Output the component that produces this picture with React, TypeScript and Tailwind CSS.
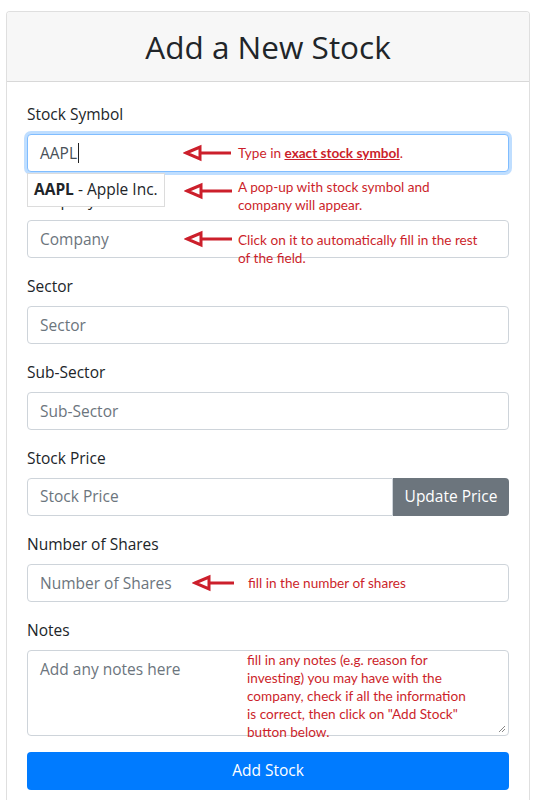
import React from "react";

const red = "#cc1f2b";
const noteFont = { color: red, fontFamily: "Lato, 'Liberation Sans', sans-serif" };

function Arrow({ w = 48, className = "" }: { w?: number; className?: string }) {
  return (
    <svg width={w} height={18} viewBox={`0 0 ${w} 18`} className={`block shrink-0 ${className}`}>
      <polygon points="3,9 17,3 17,15" fill="none" stroke={red} strokeWidth={3} strokeLinejoin="miter" />
      <line x1={17} y1={9} x2={w} y2={9} stroke={red} strokeWidth={3} />
    </svg>
  );
}

function Note({ children, className = "" }: { children: React.ReactNode; className?: string }) {
  return (
    <div className={`whitespace-nowrap text-[13.6px] leading-[18px] ${className}`} style={noteFont}>
      {children}
    </div>
  );
}

function Label({ children }: { children: React.ReactNode }) {
  return <div className="mb-2 text-[15.5px] leading-6 text-[#212529]">{children}</div>;
}

const boxCls =
  "flex h-[38px] w-full items-start rounded-[4px] border border-[#ced4da] bg-white px-3 pt-[6px] text-[15.5px] leading-6";

export default function App() {
  return (
    <div
      className="min-h-[800px] bg-white pl-[6px] pr-[7px] pt-[11px]"
      style={{ fontFamily: "'Open Sans', 'Noto Sans', sans-serif" }}
    >
      <div className="overflow-hidden rounded-[4px] border border-[rgba(0,0,0,0.125)] bg-white">
        <div className="flex h-[70px] items-center justify-center border-b border-[rgba(0,0,0,0.125)] bg-[#f7f7f7]">
          <h1 className="text-[31.5px] font-medium leading-none text-[#212529]">Add a New Stock</h1>
        </div>
        <div className="flex flex-col gap-4 px-5 pb-5 pt-5">
          {/* Stock symbol */}
          <div>
            <Label>Stock Symbol</Label>
            <div className="relative">
              <div className="flex h-[38px] w-full items-start rounded-[4px] border border-[#80bdff] bg-white px-3 pt-[6px] text-[15.5px] leading-6 text-[#495057] shadow-[0_0_0_3px_rgba(0,123,255,0.25)]">
                <span className="flex w-[143px] shrink-0 items-center">
                  AAPL
                  <span className="ml-[1px] inline-block h-[20px] w-px bg-[#222]" />
                </span>
                <Arrow className="mt-[3px]" />
                <Note className="ml-[7px] mt-[3px]">
                  Type in <span className="font-bold underline">exact stock symbol</span>.
                </Note>
              </div>
              {/* autocomplete popup with its annotation */}
              <div className="absolute left-0 top-[39px] z-10 flex items-start">
                <div className="flex h-[34px] w-[138px] shrink-0 items-center whitespace-nowrap border border-[#dcdcdc] bg-white px-[6px] text-[15.5px] text-[#212529]">
                  <span className="font-bold">AAPL</span>
                  <span>&nbsp;- Apple Inc.</span>
                </div>
                <Arrow className="ml-[19px] mt-[9px]" />
                <Note className="ml-[6px] mt-[5px]">
                  A pop-up with stock symbol and
                  <br />
                  company will appear.
                </Note>
              </div>
            </div>
          </div>

          <div>
            <Label>Company</Label>
            <div className={boxCls}>
              <span className="w-[144px] shrink-0 text-[#6c757d]">Company</span>
              <Arrow className="mt-[3px]" />
              <Note className="ml-[6px] mt-[4px]">
                Click on it to automatically fill in the rest
                <br />
                of the field.
              </Note>
            </div>
          </div>

          <div>
            <Label>Sector</Label>
            <div className={boxCls}>
              <span className="text-[#6c757d]">Sector</span>
            </div>
          </div>

          <div>
            <Label>Sub-Sector</Label>
            <div className={boxCls}>
              <span className="text-[#6c757d]">Sub-Sector</span>
            </div>
          </div>

          <div>
            <Label>Stock Price</Label>
            <div className="flex h-[38px]">
              <div className="flex flex-1 items-center rounded-l-[4px] border border-[#ced4da] bg-white px-3 text-[15.5px] text-[#6c757d]">
                Stock Price
              </div>
              <div className="flex w-[116px] items-center justify-center rounded-r-[4px] bg-[#6c757d] text-[15.5px] text-white">
                Update Price
              </div>
            </div>
          </div>

          <div>
            <Label>Number of Shares</Label>
            <div className={boxCls}>
              <span className="w-[152px] shrink-0 text-[#6c757d]">Number of Shares</span>
              <Arrow w={42} className="mt-[3px]" />
              <Note className="ml-[14px] mt-[3px]">fill in the number of shares</Note>
            </div>
          </div>

          <div>
            <Label>Notes</Label>
            <div className="relative flex h-[86px] items-start rounded-[4px] border border-[#ced4da] bg-white px-3 pt-[6px] text-[15.5px] leading-6 text-[#6c757d]">
              <span className="w-[207px] shrink-0">Add any notes here</span>
              <Note className="-mt-[6px] leading-[17.7px]">
                fill in any notes (e.g. reason for
                <br />
                investing) you may have with the
                <br />
                company, check if all the information
                <br />
                is correct, then click on "Add Stock"
                <br />
                button below.
              </Note>
              <svg width="8" height="8" viewBox="0 0 8 8" className="absolute bottom-[2px] right-[2px]">
                <line x1="1" y1="7" x2="7" y2="1" stroke="#888" strokeWidth="1" />
                <line x1="4" y1="7" x2="7" y2="4" stroke="#888" strokeWidth="1" />
              </svg>
            </div>
          </div>

          <div className="flex h-[38px] items-center justify-center rounded-[4px] bg-[#007bff] text-[15.5px] text-white">
            Add Stock
          </div>
        </div>
      </div>
    </div>
  );
}
